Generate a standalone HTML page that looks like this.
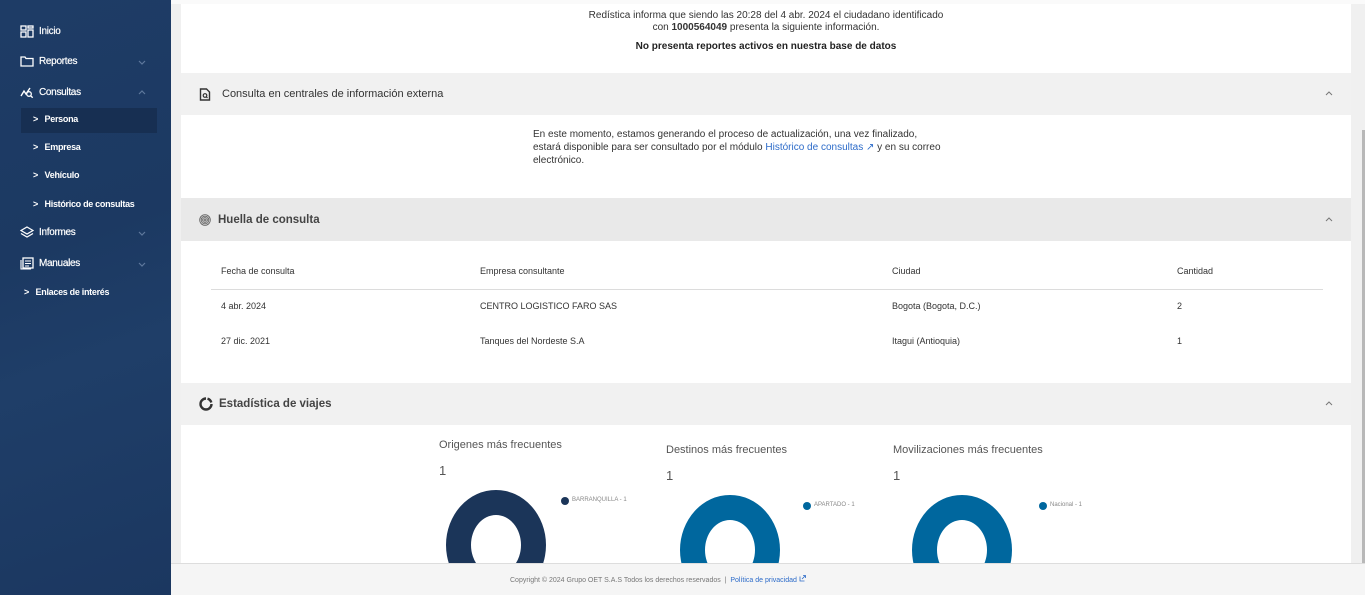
<!DOCTYPE html>
<html><head><meta charset="utf-8">
<style>
*{margin:0;padding:0;box-sizing:border-box}
html{width:1365px;height:595px;overflow:hidden}
body{width:1365px;height:595px;overflow:hidden;font-family:"Liberation Sans",sans-serif;background:#f0f0f0;position:relative}
.sb{position:absolute;left:0;top:0;width:171px;height:595px;background:linear-gradient(160deg,#1e3c66 0%,#1c3962 40%,#1f3e68 60%,#1b3760 100%)}
.sb .it{position:absolute;left:20px;color:#fff;font-size:10px;letter-spacing:-0.3px;display:flex;align-items:center;-webkit-text-stroke:0.2px #fff}
.sb .it svg{margin-right:5px}
.sb .car{position:absolute;left:138px}
.sb .sub{position:absolute;left:33px;color:#fff;font-size:9px;font-weight:bold;letter-spacing:-0.3px}
.sel{position:absolute;left:21px;top:108px;width:136px;height:25px;background:#172f52}
.main{position:absolute;left:171px;top:0;width:1194px;height:595px;background:#f0f0f0}
.card{position:absolute;left:181px;width:1170px;background:#fff}
.hd{position:absolute;left:181px;width:1170px;background:#f1f1f1;color:#444;font-size:11.5px;font-weight:bold;display:flex;align-items:center;padding-left:18px}
.hd .up{position:absolute;right:18px;top:50%;margin-top:-3px}
.t{position:absolute;font-size:9px;color:#333}
.donut{position:absolute;border-radius:50%}
</style></head><body>
<div class="sb">
<div class="sel"></div>
<div class="it" style="top:25px"><svg width="14" height="13" viewBox="0 0 14 13"><g fill="none" stroke="#fff" stroke-width="1.3"><rect x="1" y="1" width="5" height="4"/><rect x="8" y="1" width="5" height="2"/><rect x="1" y="7" width="5" height="5"/><rect x="8" y="5" width="5" height="7"/></g></svg>Inicio</div>
<div class="it" style="top:55px"><svg width="14" height="12" viewBox="0 0 14 12"><path d="M1 2h4l1 1.5h7v7.5H1z" fill="none" stroke="#fff" stroke-width="1.3"/></svg>Reportes</div><svg class="car" style="top:60px" width="8" height="5" viewBox="0 0 8 5"><path d="M1 1l3 3 3-3" fill="none" stroke="#5e789c" stroke-width="1.2"/></svg>
<div class="it" style="top:86px"><svg width="14" height="12" viewBox="0 0 14 12"><path d="M1 10l3-5 2 3 4-6" fill="none" stroke="#fff" stroke-width="1.4"/><circle cx="9" cy="8" r="2.3" fill="none" stroke="#fff" stroke-width="1.3"/><path d="M10.7 9.7l2 2" stroke="#fff" stroke-width="1.4"/></svg>Consultas</div><svg class="car" style="top:90px" width="8" height="5" viewBox="0 0 8 5"><path d="M1 4l3-3 3 3" fill="none" stroke="#5e789c" stroke-width="1.2"/></svg>
<div class="sub" style="top:114px">&gt;&nbsp;&nbsp; Persona</div>
<div class="sub" style="top:142px">&gt;&nbsp;&nbsp; Empresa</div>
<div class="sub" style="top:170px">&gt;&nbsp;&nbsp; Vehículo</div>
<div class="sub" style="top:199px">&gt;&nbsp;&nbsp; Histórico de consultas</div>
<div class="it" style="top:226px"><svg width="14" height="12" viewBox="0 0 14 12"><path d="M7 1l6 3.5-6 3.5-6-3.5z" fill="none" stroke="#fff" stroke-width="1.3"/><path d="M1 7.5l6 3.5 6-3.5" fill="none" stroke="#fff" stroke-width="1.3"/></svg>Informes</div><svg class="car" style="top:231px" width="8" height="5" viewBox="0 0 8 5"><path d="M1 1l3 3 3-3" fill="none" stroke="#5e789c" stroke-width="1.2"/></svg>
<div class="it" style="top:257px"><svg width="14" height="13" viewBox="0 0 14 13"><rect x="3" y="1" width="10" height="10" fill="none" stroke="#fff" stroke-width="1.3"/><path d="M1 3v9h10M5 4h6M5 6.5h6M5 9h4" stroke="#fff" stroke-width="1.1" fill="none"/></svg>Manuales</div><svg class="car" style="top:262px" width="8" height="5" viewBox="0 0 8 5"><path d="M1 1l3 3 3-3" fill="none" stroke="#5e789c" stroke-width="1.2"/></svg>
<div class="sub" style="top:287px;left:24px">&gt;&nbsp;&nbsp; Enlaces de interés</div>
</div>
<div class="main"></div>
<div style="position:absolute;left:171px;top:0;width:1194px;height:4px;background:#fafafa"></div>
<div style="position:absolute;left:1362px;top:130px;width:3px;height:435px;background:#b8b8b8"></div>

<div class="card" style="top:4px;height:69px"></div>
<div class="t" style="left:181px;width:1170px;top:10px;text-align:center;font-size:10px;line-height:12px;color:#333">Redística informa que siendo las 20:28 del 4 abr. 2024 el ciudadano identificado<br>con <b>1000564049</b> presenta la siguiente información.</div>
<div class="t" style="left:181px;width:1170px;top:41px;text-align:center;font-size:10px;font-weight:bold;color:#222">No presenta reportes activos en nuestra base de datos</div>

<div class="hd" style="top:73px;height:42px"><svg width="12" height="13" viewBox="0 0 12 13" style="margin-right:11px"><path d="M1.5 1h6l3 3v8h-9z" fill="none" stroke="#333" stroke-width="1.4"/><circle cx="6" cy="7.5" r="1.8" fill="none" stroke="#333" stroke-width="1.2"/><path d="M7.3 8.8l1.2 1.2" stroke="#333" stroke-width="1.2"/></svg><span style="font-weight:normal;color:#333;font-size:11px">Consulta en centrales de información externa</span><svg class="up" width="8" height="5" viewBox="0 0 8 5"><path d="M1 4l3-3 3 3" fill="none" stroke="#777" stroke-width="1"/></svg></div>
<div class="card" style="top:115px;height:83px"></div>
<div class="t" style="left:533px;top:128px;font-size:10px;line-height:13px;color:#333">En este momento, estamos generando el proceso de actualización, una vez finalizado,<br>estará disponible para ser consultado por el módulo <span style="color:#2c6bc9">Histórico de consultas ↗</span> y en su correo<br>electrónico.</div>

<div class="hd" style="top:198px;height:43px;background:#e9e9e9"><svg width="12" height="12" viewBox="0 0 12 12" style="margin-right:7px"><g fill="none" stroke="#666" stroke-width="0.9"><circle cx="6" cy="6" r="5.3"/><circle cx="6" cy="6" r="3.8"/><circle cx="6" cy="6" r="2.4"/><circle cx="6" cy="6" r="1"/></g></svg>Huella de consulta<svg class="up" width="8" height="5" viewBox="0 0 8 5"><path d="M1 4l3-3 3 3" fill="none" stroke="#777" stroke-width="1"/></svg></div>
<div class="card" style="top:241px;height:142px"></div>
<div class="t" style="left:221px;top:266px">Fecha de consulta</div>
<div class="t" style="left:480px;top:266px">Empresa consultante</div>
<div class="t" style="left:892px;top:266px">Ciudad</div>
<div class="t" style="left:1177px;top:266px">Cantidad</div>
<div style="position:absolute;left:211px;top:289px;width:1112px;height:1px;background:#dcdcdc"></div>
<div class="t" style="left:221px;top:301px">4 abr. 2024</div>
<div class="t" style="left:480px;top:301px">CENTRO LOGISTICO FARO SAS</div>
<div class="t" style="left:892px;top:301px">Bogota (Bogota, D.C.)</div>
<div class="t" style="left:1177px;top:301px">2</div>
<div class="t" style="left:221px;top:336px">27 dic. 2021</div>
<div class="t" style="left:480px;top:336px">Tanques del Nordeste S.A</div>
<div class="t" style="left:892px;top:336px">Itagui (Antioquia)</div>
<div class="t" style="left:1177px;top:336px">1</div>

<div class="hd" style="top:383px;height:42px"><svg width="14" height="14" viewBox="0 0 14 14" style="margin-right:6px"><path d="M7 1.5A5.5 5.5 0 1 0 12.5 7" fill="none" stroke="#333" stroke-width="2.4"/><path d="M8.5 1.7A5.5 5.5 0 0 1 12.3 5.5" fill="none" stroke="#333" stroke-width="2.4"/></svg>Estadística de viajes<svg class="up" width="8" height="5" viewBox="0 0 8 5"><path d="M1 4l3-3 3 3" fill="none" stroke="#777" stroke-width="1"/></svg></div>
<div class="card" style="top:425px;height:138px;overflow:hidden">
<div class="t" style="left:258px;top:14px;font-size:11px;color:#555">Origenes más frecuentes</div>
<div class="t" style="left:258px;top:38px;font-size:13px;color:#555">1</div>
<div class="donut" style="left:265px;top:65px;width:100px;height:110px;border:25px solid #1b3559"></div>
<div style="position:absolute;left:380px;top:72px;width:8px;height:8px;border-radius:50%;background:#1b3559"></div>
<div class="t" style="left:391px;top:72px;font-size:6px;color:#888">BARRANQUILLA - 1</div>
<div class="t" style="left:485px;top:19px;font-size:11px;color:#555">Destinos más frecuentes</div>
<div class="t" style="left:485px;top:43px;font-size:13px;color:#555">1</div>
<div class="donut" style="left:499px;top:70px;width:100px;height:110px;border:25px solid #00679e"></div>
<div style="position:absolute;left:622px;top:77px;width:8px;height:8px;border-radius:50%;background:#00679e"></div>
<div class="t" style="left:633px;top:77px;font-size:6px;color:#888">APARTADO - 1</div>
<div class="t" style="left:712px;top:19px;font-size:11px;color:#555">Movilizaciones más frecuentes</div>
<div class="t" style="left:712px;top:43px;font-size:13px;color:#555">1</div>
<div class="donut" style="left:731px;top:70px;width:100px;height:110px;border:25px solid #00679e"></div>
<div style="position:absolute;left:858px;top:77px;width:8px;height:8px;border-radius:50%;background:#00679e"></div>
<div class="t" style="left:869px;top:77px;font-size:6px;color:#888">Nacional - 1</div>
</div>

<div style="position:absolute;left:171px;top:563px;width:1194px;height:32px;background:#f5f5f5;border-top:1px solid #ddd;z-index:5"></div>
<div class="t" style="left:510px;top:575px;font-size:7px;color:#777;z-index:6">Copyright © 2024 Grupo OET S.A.S Todos los derechos reservados &nbsp;|&nbsp; <span style="color:#2c6bc9">Política de privacidad <svg width="7" height="7" viewBox="0 0 7 7"><path d="M1 1.5v4.5h4.5M3 4l3.5-3.5M4 0.5h2.5V3" fill="none" stroke="#2c6bc9" stroke-width="0.8"/></svg></span></div>
</body></html>
